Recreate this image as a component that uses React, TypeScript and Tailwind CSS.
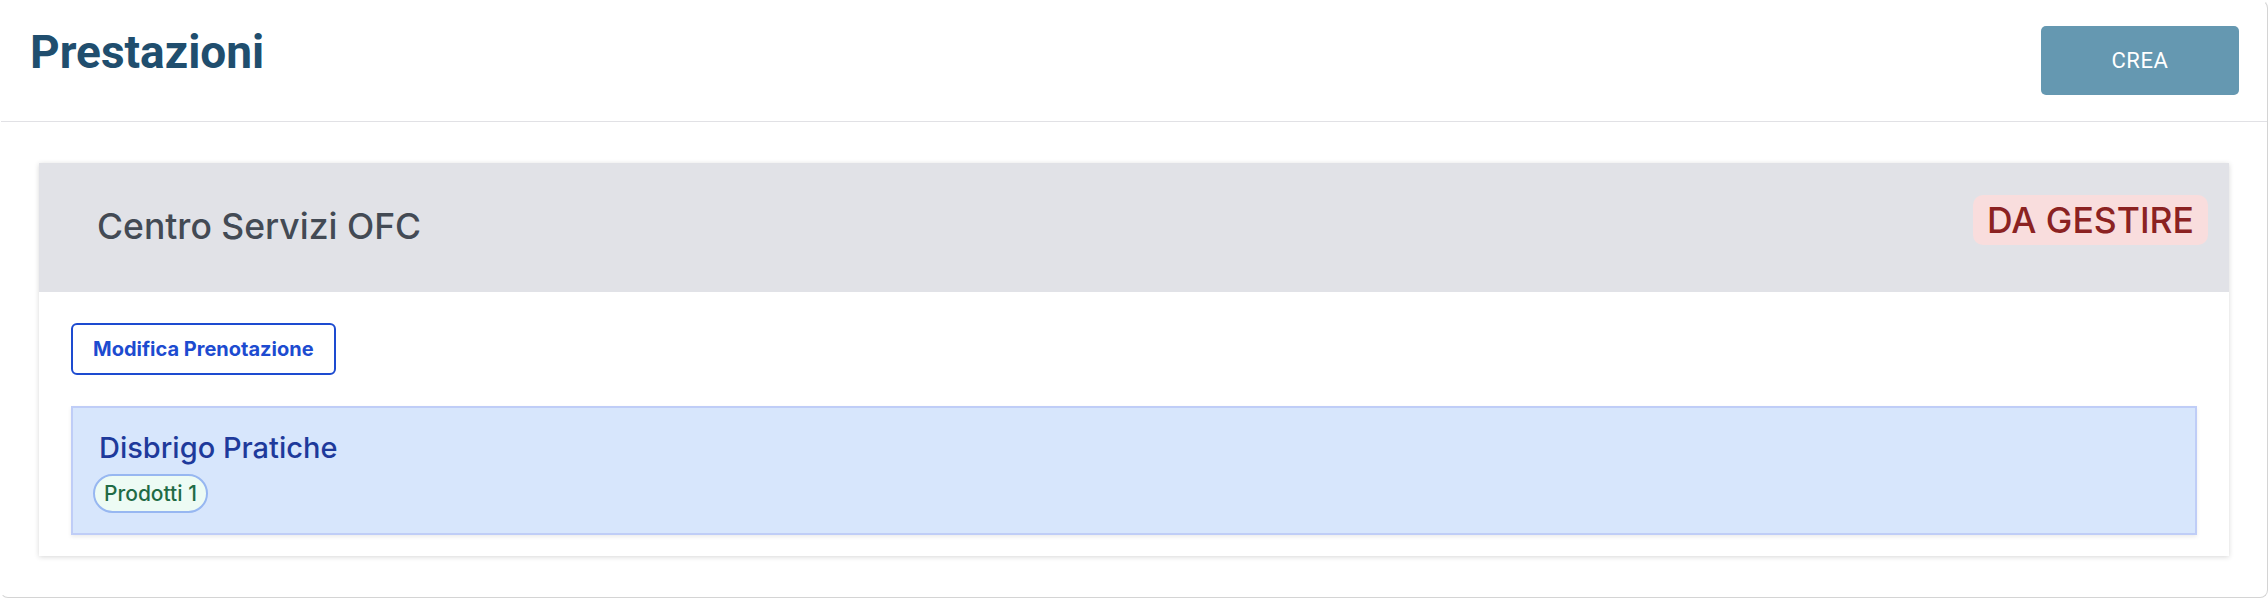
import React from 'react';

const App: React.FC = () => {
  return (
    <div className="w-[2268px] h-[598px] bg-white font-['Roboto',sans-serif]">
      <div className="h-full rounded-[8px] border border-[#d4d4d4] border-l-transparent border-t-transparent overflow-hidden flex flex-col">
        {/* Header */}
        <div className="h-[121px] shrink-0 flex justify-between items-start pl-[29px] pr-[28px] pt-[25px] border-b border-[#e1e1e5]">
          <h1 className="mt-[3px] text-[46px] leading-none font-bold text-[#204e6e]">Prestazioni</h1>
          <button className="w-[198px] h-[69px] rounded-[5px] bg-[#6598b1] text-white text-[22px] font-normal tracking-[0.6px] flex items-center justify-center">
            CREA
          </button>
        </div>

        {/* Content */}
        <div className="px-[38px] pt-[41px] font-['Inter',sans-serif]">
          <div className="bg-white shadow-[0_1px_5px_rgba(0,0,0,0.16)]">
            <div className="h-[129px] bg-[#e1e2e7] flex justify-between items-start pl-[58px] pr-[21px]">
              <h2 className="mt-[46px] text-[35.5px] leading-none font-medium text-[#434a54]">Centro Servizi OFC</h2>
              <span className="mt-[32px] h-[50px] px-[14px] pt-[8px] rounded-[10px] bg-[#f9dddd] text-[#8b2222] text-[35.5px] font-medium leading-none">
                DA GESTIRE
              </span>
            </div>

            <div className="pl-[32px] pr-[32px] pt-[31px] pb-[21px]">
              <button className="h-[52px] px-[20px] rounded-[6px] border-2 border-[#1d4bd0] text-[#1d4bd0] text-[20px] font-bold leading-none">
                Modifica Prenotazione
              </button>

              <div className="mt-[31px] border-2 border-[#bfcdf7] bg-[#d7e6fc] shadow-[0_2px_4px_rgba(0,0,0,0.08)] pl-[20px] pt-[25px] pb-[20px]">
                <div className="pl-[6px] text-[29px] leading-none font-medium text-[#1e3a9b]">Disbrigo Pratiche</div>
                <div className="mt-[12px] flex">
                  <span className="h-[39px] px-[9px] rounded-full border-2 border-[#97b7f1] bg-[#edfbf4] text-[#1f6b45] text-[21px] font-medium leading-none flex items-center">
                    Prodotti 1
                  </span>
                </div>
              </div>
            </div>
          </div>
        </div>
      </div>
    </div>
  );
};

export default App;
